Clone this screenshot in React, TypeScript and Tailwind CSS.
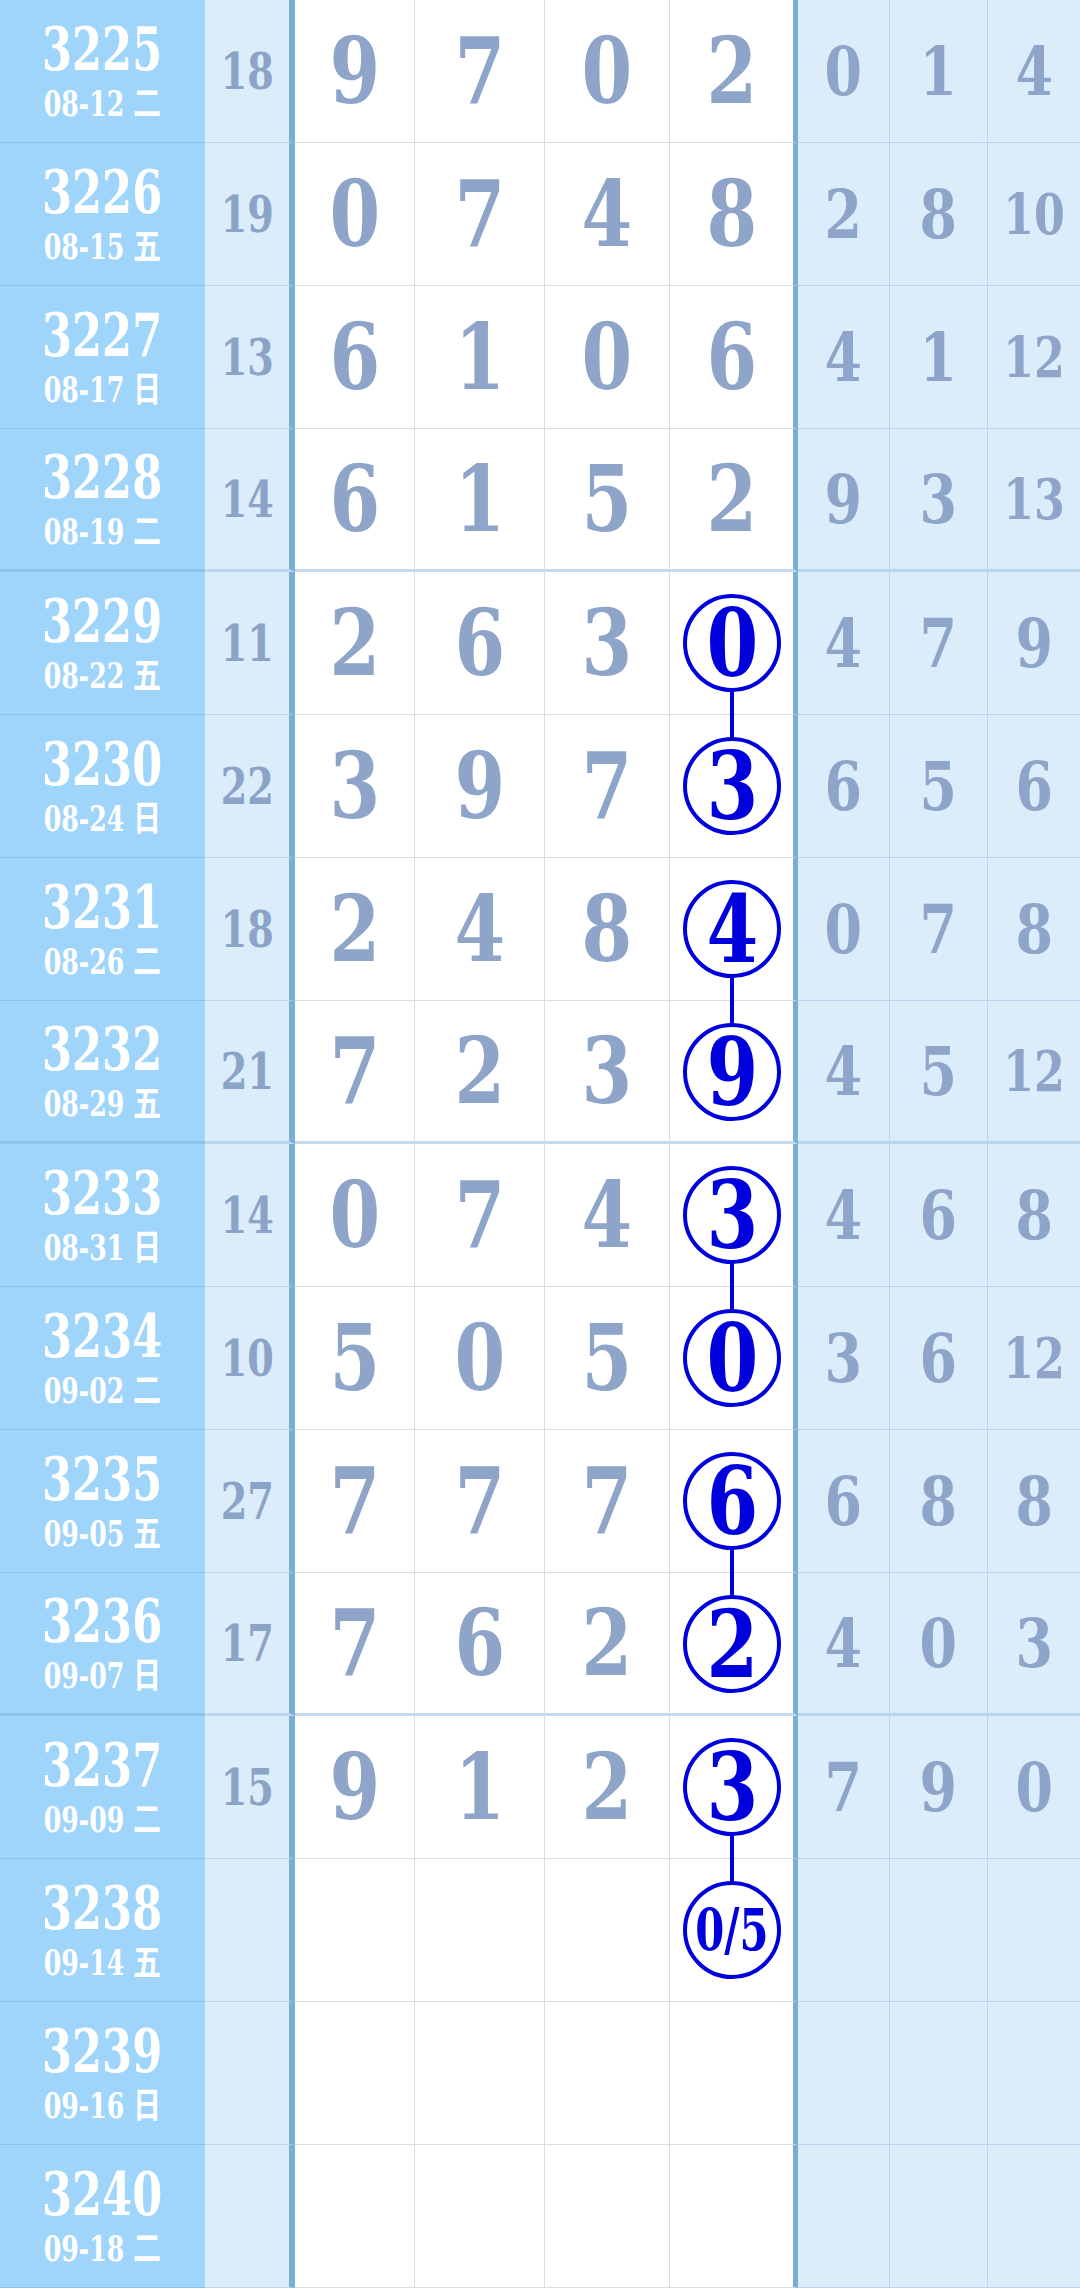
import React from "react";

type Row = {
  issue: string;
  date: string;
  sum?: string;
  nums?: string[];
  pick?: string;
  tail?: string[];
  link?: boolean;
};

const rows: Row[] = [
  { issue: "3225", date: "08-12 二", sum: "18", nums: ["9", "7", "0", "2"], tail: ["0", "1", "4"] },
  { issue: "3226", date: "08-15 五", sum: "19", nums: ["0", "7", "4", "8"], tail: ["2", "8", "10"] },
  { issue: "3227", date: "08-17 日", sum: "13", nums: ["6", "1", "0", "6"], tail: ["4", "1", "12"] },
  { issue: "3228", date: "08-19 二", sum: "14", nums: ["6", "1", "5", "2"], tail: ["9", "3", "13"] },
  { issue: "3229", date: "08-22 五", sum: "11", nums: ["2", "6", "3"], pick: "0", link: true, tail: ["4", "7", "9"] },
  { issue: "3230", date: "08-24 日", sum: "22", nums: ["3", "9", "7"], pick: "3", tail: ["6", "5", "6"] },
  { issue: "3231", date: "08-26 二", sum: "18", nums: ["2", "4", "8"], pick: "4", link: true, tail: ["0", "7", "8"] },
  { issue: "3232", date: "08-29 五", sum: "21", nums: ["7", "2", "3"], pick: "9", tail: ["4", "5", "12"] },
  { issue: "3233", date: "08-31 日", sum: "14", nums: ["0", "7", "4"], pick: "3", link: true, tail: ["4", "6", "8"] },
  { issue: "3234", date: "09-02 二", sum: "10", nums: ["5", "0", "5"], pick: "0", tail: ["3", "6", "12"] },
  { issue: "3235", date: "09-05 五", sum: "27", nums: ["7", "7", "7"], pick: "6", link: true, tail: ["6", "8", "8"] },
  { issue: "3236", date: "09-07 日", sum: "17", nums: ["7", "6", "2"], pick: "2", tail: ["4", "0", "3"] },
  { issue: "3237", date: "09-09 二", sum: "15", nums: ["9", "1", "2"], pick: "3", link: true, tail: ["7", "9", "0"] },
  { issue: "3238", date: "09-14 五", pick: "0/5" },
  { issue: "3239", date: "09-16 日" },
  { issue: "3240", date: "09-18 二" },
];

const serif = "font-['DejaVu_Serif_Condensed','DejaVu_Serif','Noto_Sans_CJK_SC',serif] font-bold";
const mid = [
  "w-[120px] border-r border-[#d6dde4]",
  "w-[130px] border-r border-[#d6dde4]",
  "w-[125px] border-r border-[#d6dde4]",
];
const right = [
  "w-[92px] border-r border-[#b9d4ee]",
  "w-[98px] border-r border-[#b9d4ee]",
  "w-[92px]",
];

export default function App() {
  return (
    <div className={`w-[1080px] h-[2289px] overflow-hidden bg-white ${serif}`}>
      {rows.map((r, i) => {
        const group = i === 3 || i === 7 || i === 11;
        const line = group ? "border-b-[3px]" : "border-b";
        const midLine = group ? "border-b-[#c4d9ed]" : "border-b-[#d6dde4]";
        return (
          <div key={r.issue} className="flex h-[143px]">
            {/* issue + date */}
            <div
              className={`w-[205px] flex flex-col items-center justify-center bg-[#9fd4fb] text-white ${line} border-[#8cc3ea]`}
            >
              <span className="text-[60px] leading-[60px] scale-x-[0.8]">{r.issue}</span>
              <span className="text-[35px] leading-[38px] mt-[6px] scale-x-[0.8]">{r.date}</span>
            </div>
            {/* sum */}
            <div
              className={`w-[90px] flex items-center justify-center bg-[#dbecfb] text-[#8aa3c6] text-[50px] border-r-[6px] border-r-[#7aaed3] ${line} border-b-[#bdd5ec]`}
            >
              <span className="scale-x-[0.85]">{r.sum}</span>
            </div>
            {/* digits */}
            {mid.map((cls, k) => (
              <div
                key={k}
                className={`${cls} flex items-center justify-center text-[#8ea4c8] text-[92px] ${line} ${midLine}`}
              >
                <span className="scale-x-[0.88]">{r.nums?.[k]}</span>
              </div>
            ))}
            <div
              className={`relative w-[128px] flex items-center justify-center text-[#8ea4c8] text-[92px] border-r-[5px] border-r-[#7aaed3] ${line} ${midLine}`}
            >
              <span className="scale-x-[0.88]">{r.nums?.[3]}</span>
              {r.link && (
                <div className="absolute left-[60px] top-[71px] w-[4px] h-[143px] bg-[#0000dd]" />
              )}
              {r.pick && (
                <div className="absolute z-10 left-[13px] top-[22px] w-[98px] h-[98px] rounded-full border-[4px] border-[#0000dd] bg-white flex items-center justify-center text-[#0000dd]">
                  <span
                    className={
                      r.pick.length > 1
                        ? "text-[58px] scale-x-[0.8]"
                        : "text-[94px] leading-none scale-x-[0.88]"
                    }
                  >
                    {r.pick}
                  </span>
                </div>
              )}
            </div>
            {/* tail */}
            {right.map((cls, k) => {
              const v = r.tail?.[k];
              return (
                <div
                  key={k}
                  className={`${cls} flex items-center justify-center bg-[#dbecfb] text-[#8ea4c8] ${v && v.length > 1 ? "text-[56px]" : "text-[68px]"} ${line} border-b-[#b9d4ee]`}
                >
                  <span className="scale-x-[0.88]">{v}</span>
                </div>
              );
            })}
          </div>
        );
      })}
    </div>
  );
}
